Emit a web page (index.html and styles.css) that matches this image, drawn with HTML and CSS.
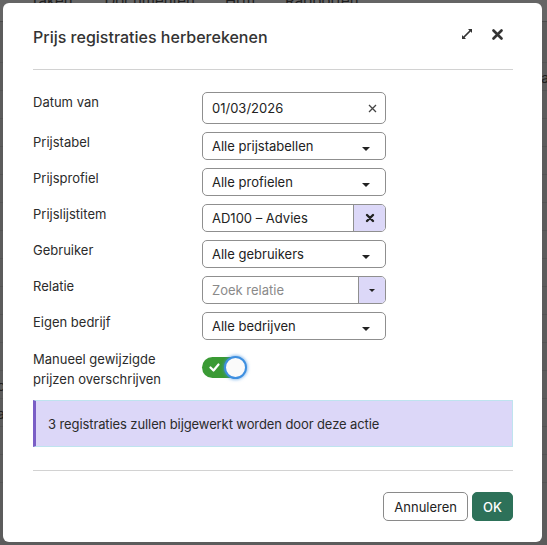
FILE: index.html
```html
<!DOCTYPE html>
<html lang="nl">
<head>
<meta charset="utf-8">
<link rel="stylesheet" href="styles.css">
</head>
<body>
<div class="app">
  <nav class="topnav"><span>Taken</span><span>Documenten</span><span>Hrm</span><span>Rapporten</span></nav>
  <div class="rows">
    <div class="row"></div><div class="row"><span class="cell-r">a</span></div><div class="row"></div><div class="row"></div>
    <div class="row"></div><div class="row"></div><div class="row"></div><div class="row"></div>
    <div class="row"></div><div class="row"></div><div class="row"></div><div class="row"></div>
    <div class="row"><span class="cell-l">c</span></div><div class="row"><span class="cell-l">a</span></div><div class="row"></div><div class="row"></div>
  </div>
</div>

<div class="modal">
  <div class="modal-header">
    <h1 class="modal-title">Prijs registraties herberekenen</h1>
    <div class="modal-tools">
      <svg class="tool" width="12" height="12" viewBox="0 0 12 12"><path d="M7 1h4v4l-1.4-1.4L3.6 9.6 5 11H1V7l1.4 1.4 6-6z" fill="#333"/></svg>
      <svg class="tool" width="11" height="11" viewBox="0 0 11 11"><path d="M1.5 1.5l8 8M9.5 1.5l-8 8" stroke="#333" stroke-width="2.6" stroke-linecap="round"/></svg>
    </div>
  </div>

  <div class="form">
    <label class="lbl">Datum van</label>
    <div class="field field-date"><span class="val">01/03/2026</span><svg class="clear" width="9" height="9" viewBox="0 0 9 9"><path d="M1 1l7 7M8 1l-7 7" stroke="#444" stroke-width="1.3"/></svg></div>

    <label class="lbl">Prijstabel</label>
    <div class="field"><span class="val">Alle prijstabellen</span><span class="caret"></span></div>

    <label class="lbl">Prijsprofiel</label>
    <div class="field"><span class="val">Alle profielen</span><span class="caret"></span></div>

    <label class="lbl">Prijslijstitem</label>
    <div class="field field-group"><span class="val">AD100 – Advies</span><span class="addon addon-x"><svg width="10" height="10" viewBox="0 0 10 10"><path d="M2 2l6 6M8 2l-6 6" stroke="#222" stroke-width="2.4" stroke-linecap="round"/></svg></span></div>

    <label class="lbl">Gebruiker</label>
    <div class="field"><span class="val">Alle gebruikers</span><span class="caret"></span></div>

    <label class="lbl">Relatie</label>
    <div class="field field-group"><span class="val placeholder">Zoek relatie</span><span class="addon addon-caret"><span class="caret small"></span></span></div>

    <label class="lbl">Eigen bedrijf</label>
    <div class="field"><span class="val">Alle bedrijven</span><span class="caret"></span></div>

    <label class="lbl lbl-2">Manueel gewijzigde<br>prijzen overschrijven</label>
    <div class="toggle-cell">
      <div class="toggle">
        <svg class="check" width="11" height="9" viewBox="0 0 11 9"><path d="M1.5 4.5l3 3 5-6" stroke="#fff" stroke-width="2.2" fill="none" stroke-linecap="round" stroke-linejoin="round"/></svg>
        <span class="knob"></span>
      </div>
    </div>
  </div>

  <div class="alert">3 registraties zullen bijgewerkt worden door deze actie</div>

  <div class="modal-footer">
    <button class="btn btn-light">Annuleren</button>
    <button class="btn btn-ok">OK</button>
  </div>
</div>
</body>
</html>
```
FILE: styles.css
```css
* { box-sizing: border-box; }
html, body { margin: 0; padding: 0; }
body {
  width: 547px;
  height: 545px;
  overflow: hidden;
  background: #5c5c5c;
  font-family: Inter, "Noto Sans", sans-serif;
  position: relative;
}
.app { width: 547px; height: 545px; }
.topnav {
  display: flex;
  gap: 30px;
  padding-left: 30px;
  height: 31px;
  margin-top: -9px;
  font-size: 15px;
  color: #1f1f1f;
  border-bottom: 1px solid #4a4a4a;
  background: #656565;
}
.topnav span:nth-child(2) { margin-left: 2px; }
.rows { margin-top: 13px; }
.row {
  height: 28px;
  border-bottom: 1px solid #545454;
  position: relative;
  font-size: 14px;
  color: #1f1f1f;
}
.cell-r { position: absolute; right: -2px; top: 6px; }
.cell-l { position: absolute; left: -3px; top: 6px; }

.modal {
  position: absolute;
  left: 3px;
  top: 3px;
  width: 539px;
  height: 539px;
  background: #fff;
  border-radius: 6px;
  padding: 0 29px 0 30px;
  color: #2b2b2b;
}
.modal-header {
  display: flex;
  align-items: flex-start;
  justify-content: space-between;
  padding-top: 22px;
  height: 67px;
  border-bottom: 1px solid #d2d2d2;
}
.modal-title {
  margin: 0;
  font-size: 16px;
  font-weight: 500;
  line-height: 24px;
  color: #333;
}
.modal-tools {
  display: flex;
  gap: 19px;
  align-items: center;
  padding-top: 3px;
  padding-right: 10px;
}
.form {
  display: grid;
  grid-template-columns: 169px 184px;
  row-gap: 8px;
  margin-top: 22px;
  font-size: 13px;
}
.lbl {
  line-height: 20px;
  color: #2b2b2b;
}
.lbl-2 { line-height: 20px; margin-top: 1px; }
.field {
  height: 28px;
  border: 1px solid #8f8f8f;
  border-radius: 5px;
  display: flex;
  align-items: center;
  padding-left: 9px;
  color: #222;
  position: relative;
  overflow: hidden;
}
.field-date { height: 32px; }
.val { flex: 1; }
.placeholder { color: #8a8a8a; }
.clear { margin-right: 8px; }
.caret {
  width: 0; height: 0;
  border-left: 4px solid transparent;
  border-right: 4px solid transparent;
  border-top: 4px solid #222;
  margin-right: 15px;
  margin-top: 5px;
}
.caret.small {
  border-left-width: 3px;
  border-right-width: 3px;
  border-top-width: 3px;
  margin: 0;
}
.field-group { padding-right: 0; }
.addon {
  align-self: stretch;
  background: #dcd8f8;
  border-left: 1px solid #8f8f8f;
  display: flex;
  align-items: center;
  justify-content: center;
}
.addon-x { width: 32px; }
.addon-caret { width: 27px; }
.toggle-cell { padding-top: 9px; }
.toggle {
  width: 44px;
  height: 21px;
  border-radius: 11px;
  background: #3a9a34;
  position: relative;
}
.check { position: absolute; left: 7px; top: 6px; }
.knob {
  position: absolute;
  right: -1px;
  top: -1px;
  width: 23px;
  height: 23px;
  border-radius: 50%;
  background: #fafafa;
  border: 2px solid #3e8fe0;
  box-shadow: 0 0 3px 1px rgba(62, 143, 224, 0.55);
}
.alert {
  margin-top: 11px;
  height: 47px;
  background: #dcd7f8;
  border: 1px solid #bfe3ef;
  border-left: 3px solid #7a5ec6;
  padding-left: 12px;
  display: flex;
  align-items: center;
  font-size: 13px;
  letter-spacing: -0.1px;
  color: #2b2b2b;
}
.modal-footer {
  margin-top: 23px;
  border-top: 1px solid #d2d2d2;
  padding-top: 21px;
  display: flex;
  justify-content: flex-end;
  gap: 4px;
}
.btn {
  height: 29px;
  font-family: Inter, "Noto Sans", sans-serif;
  font-size: 13px;
  border-radius: 5px;
  padding: 0 10px;
  cursor: pointer;
}
.btn-light {
  background: #fff;
  border: 1px solid #8a8a8a;
  color: #222;
}
.btn-ok {
  background: #2d7159;
  border: 1px solid #2d7159;
  color: #fff;
  width: 41px;
  padding: 0;
  font-weight: 500;
}
```
